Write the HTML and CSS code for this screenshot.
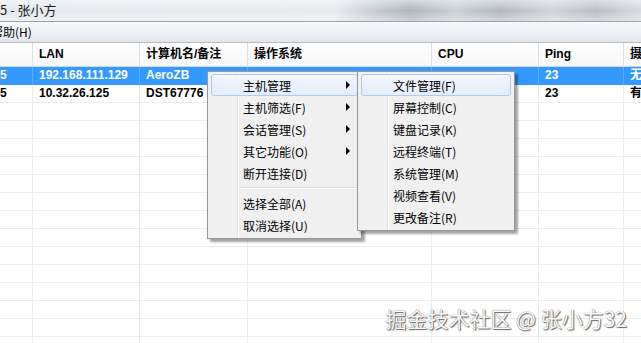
FILE: index.html
```html
<!DOCTYPE html>
<html lang="zh-CN">
<head>
  <meta charset="UTF-8">
  <title>张小方</title>
  <link rel="stylesheet" href="styles.css">
</head>
<body>

  <div class="window">
    <!-- Title bar -->
    <div class="titlebar">5 - 张小方</div>

    <!-- Menu bar -->
    <div class="menubar"><span class="menubar-item">帮助(H)</span></div>

    <!-- Host list -->
    <div class="grid">
      <div class="row head">
        <div class="cell"></div>
        <div class="cell">LAN</div>
        <div class="cell">计算机名/备注</div>
        <div class="cell">操作系统</div>
        <div class="cell">CPU</div>
        <div class="cell">Ping</div>
        <div class="cell">摄像头</div>
      </div>
      <div class="row selected">
        <div class="cell first">5</div>
        <div class="cell">192.168.111.129</div>
        <div class="cell">AeroZB</div>
        <div class="cell"></div>
        <div class="cell"></div>
        <div class="cell">23</div>
        <div class="cell">无</div>
      </div>
      <div class="row">
        <div class="cell first">5</div>
        <div class="cell">10.32.26.125</div>
        <div class="cell">DST67776</div>
        <div class="cell"></div>
        <div class="cell"></div>
        <div class="cell">23</div>
        <div class="cell">有</div>
      </div>
    </div>
  </div>

  <!-- Context menu -->
  <div class="menu main-menu">
    <div class="item active">主机管理<span class="arrow"></span></div>
    <div class="item">主机筛选(F)<span class="arrow"></span></div>
    <div class="item">会话管理(S)<span class="arrow"></span></div>
    <div class="item">其它功能(O)<span class="arrow"></span></div>
    <div class="item">断开连接(D)</div>
    <div class="separator"></div>
    <div class="item">选择全部(A)</div>
    <div class="item">取消选择(U)</div>
  </div>

  <!-- Sub menu -->
  <div class="menu sub-menu">
    <div class="item active">文件管理(F)</div>
    <div class="item">屏幕控制(C)</div>
    <div class="item">键盘记录(K)</div>
    <div class="item">远程终端(T)</div>
    <div class="item">系统管理(M)</div>
    <div class="item">视频查看(V)</div>
    <div class="item">更改备注(R)</div>
  </div>

  <div class="watermark">掘金技术社区 @ 张小方32</div>

  <script>
    // fill the list with empty rows down to the bottom of the window
    const grid = document.querySelector('.grid');
    for (let i = 0; i < 14; i++) {
      const row = document.createElement('div');
      row.className = 'row';
      for (let j = 0; j < 7; j++) {
        const cell = document.createElement('div');
        cell.className = 'cell';
        row.appendChild(cell);
      }
      grid.appendChild(row);
    }
  </script>
</body>
</html>
```

FILE: styles.css
```css
/* General Styles */
body {
  margin: 0;
  width: 641px;
  height: 343px;
  overflow: hidden;
  background: #fff;
  font-family: "Noto Sans CJK SC", sans-serif;
  color: #000;
}
.window {
  display: flex;
  flex-direction: column;
}
.titlebar {
  height: 21px;
  line-height: 20px;
  font-size: 13px;
  color: #1b1b1b;
  white-space: nowrap;
  border-bottom: 1px solid #9aa1a9;
  background:
    linear-gradient(180deg, rgba(255, 255, 255, 0.5), rgba(255, 255, 255, 0) 50%, rgba(255, 255, 255, 0.4)),
    linear-gradient(90deg, #e4e8ec 0, #e7eaee 52%, #c8cdd3 58%, #aeb4ba 64%, #c9ced3 71%, #b3b8be 78%, #cfd3d8 86%, #b9bec4 93%, #d6dade 100%);
}
.menubar {
  height: 20px;
  line-height: 20px;
  font-size: 12px;
  overflow: hidden;
  white-space: nowrap;
  border-bottom: 1px solid #b4bbc4;
  background: linear-gradient(#f8f9fb, #eceff3 60%, #e2e6eb);
}
.menubar-item {
  display: inline-block;
  margin-left: -9px;
}

/* Host list */
.grid {
  display: flex;
  flex-direction: column;
}
.row {
  display: grid;
  grid-template-columns: 33px 107px 108px 184px 107px 85px 60px;
  height: 18px;
  font-family: "Liberation Sans", "Noto Sans CJK SC", sans-serif;
  font-weight: bold;
  font-size: 12px;
}
.cell {
  padding-left: 6px;
  line-height: 17px;
  white-space: nowrap;
  overflow: hidden;
  border-right: 1px solid #ececec;
  border-bottom: 1px solid #ececec;
}
.cell.first {
  padding-left: 0;
}
.row.head {
  height: 24px;
}
.row.head .cell {
  line-height: 23px;
  background: linear-gradient(#ffffff, #f6f7f8);
  border-right-color: #dcdfe3;
  border-bottom-color: #d5d5d5;
}
.row.selected {
  background: #3399ff;
  color: #fff;
}
.row.selected .cell {
  border-color: #5aadff;
  border-bottom-color: #3399ff;
}

/* Context menus */
.menu {
  position: absolute;
  top: 71px;
  box-sizing: border-box;
  padding: 2px;
  font-size: 12px;
  border: 1px solid #979797;
  background:
    linear-gradient(90deg, transparent 29px, #e2e3e3 29px, #e2e3e3 30px, #fff 30px, #fff 31px, transparent 31px),
    #f0f0f0;
  box-shadow: 3px 3px 2px rgba(0, 0, 0, 0.35);
}
.main-menu {
  left: 207px;
  width: 155px;
}
.sub-menu {
  left: 357px;
  width: 158px;
}
.item {
  display: flex;
  align-items: center;
  height: 22px;
  box-sizing: border-box;
  margin: 0 1px;
  padding-left: 31px;
  border: 1px solid transparent;
  border-radius: 3px;
  white-space: nowrap;
}
.item.active {
  border-color: #aeccf0;
  background: linear-gradient(#f2f6fd, #e3ecfa);
}
.arrow {
  margin-left: auto;
  margin-right: 7px;
  width: 0;
  height: 0;
  border-left: 4px solid #000;
  border-top: 4px solid transparent;
  border-bottom: 4px solid transparent;
}
.separator {
  height: 8px;
  margin-left: 30px;
  background: linear-gradient(transparent 3px, #e0e0e0 3px, #e0e0e0 4px, #fff 4px, #fff 5px, transparent 5px);
}

/* Watermark */
.watermark {
  position: absolute;
  right: 14px;
  top: 303px;
  font-size: 21px;
  color: #fafafa;
  white-space: nowrap;
  text-shadow: 0 0 1px #555, 1px 1px 1px #666;
}
```
